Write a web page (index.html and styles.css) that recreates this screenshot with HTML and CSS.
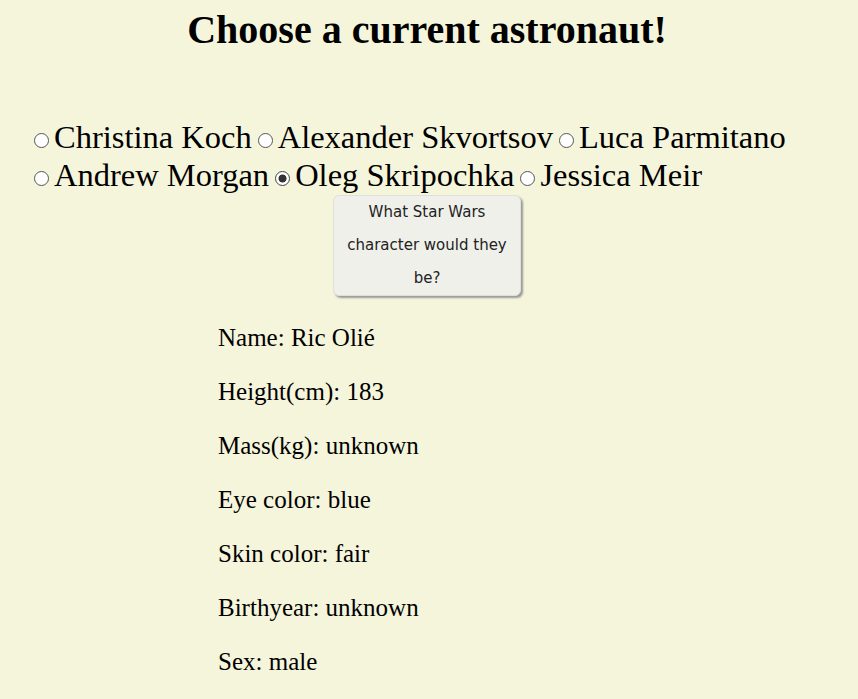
FILE: index.html
```html
<!DOCTYPE html>
<html>
<head>
<meta charset="utf-8">
<link rel="stylesheet" href="styles.css">
</head>
<body>
<h1 class="title">Choose a current astronaut!</h1>
<form class="choices">
  <label class="choice"><input type="radio" name="a">Christina Koch</label>
  <label class="choice"><input type="radio" name="a">Alexander Skvortsov</label>
  <label class="choice"><input type="radio" name="a">Luca Parmitano</label>
  <label class="choice"><input type="radio" name="a">Andrew Morgan</label>
  <label class="choice"><input type="radio" name="a" checked>Oleg Skripochka</label>
  <label class="choice"><input type="radio" name="a">Jessica Meir</label>
</form>
<div class="action">
  <button class="btn" type="button">What Star Wars character would they be?</button>
</div>
<div class="details">
  <p>Name: Ric Olié</p>
  <p>Height(cm): 183</p>
  <p>Mass(kg): unknown</p>
  <p>Eye color: blue</p>
  <p>Skin color: fair</p>
  <p>Birthyear: unknown</p>
  <p>Sex: male</p>
</div>
</body>
</html>
```
FILE: styles.css
```css
html, body {
  background: #f5f5dc;
}
body {
  margin: 0;
  padding: 0 4px 0 0;
  font-family: "Liberation Serif", "Times New Roman", serif;
  color: #000;
}
.title {
  margin: 8px 0 0;
  text-align: center;
  font-size: 40px;
  line-height: 44px;
  font-weight: bold;
}
.choices {
  display: flex;
  flex-wrap: wrap;
  margin: 66px 0 0;
  padding: 0 28px;
  font-size: 32.5px;
  line-height: 38px;
  max-width: 790px;
}
.choice {
  white-space: nowrap;
}
.choice input {
  appearance: none;
  -webkit-appearance: none;
  box-sizing: border-box;
  margin: 0 5px 0 6px;
  vertical-align: 0;
  width: 15px;
  height: 15px;
  border: 1px solid #555;
  border-radius: 50%;
  background: #fff;
}
.choice input:checked {
  border-color: #444;
  background: radial-gradient(circle, #333 0 3.6px, #fff 4.4px);
}
.action {
  display: flex;
  justify-content: center;
  margin-top: 1px;
}
.btn {
  width: 188px;
  padding: 0 12px;
  font-family: "DejaVu Sans", Verdana, sans-serif;
  font-size: 15px;
  line-height: 33px;
  color: #222;
  background: #f0f0ea;
  border: 1px solid #e0e0da;
  border-radius: 6px;
  box-shadow: 2px 2px 2px #9a9a9a;
}
.details {
  display: flex;
  flex-direction: column;
  gap: 25px;
  padding: 27px 0 0 218px;
  font-size: 25px;
  line-height: 29px;
}
.details p {
  margin: 0;
}
```
